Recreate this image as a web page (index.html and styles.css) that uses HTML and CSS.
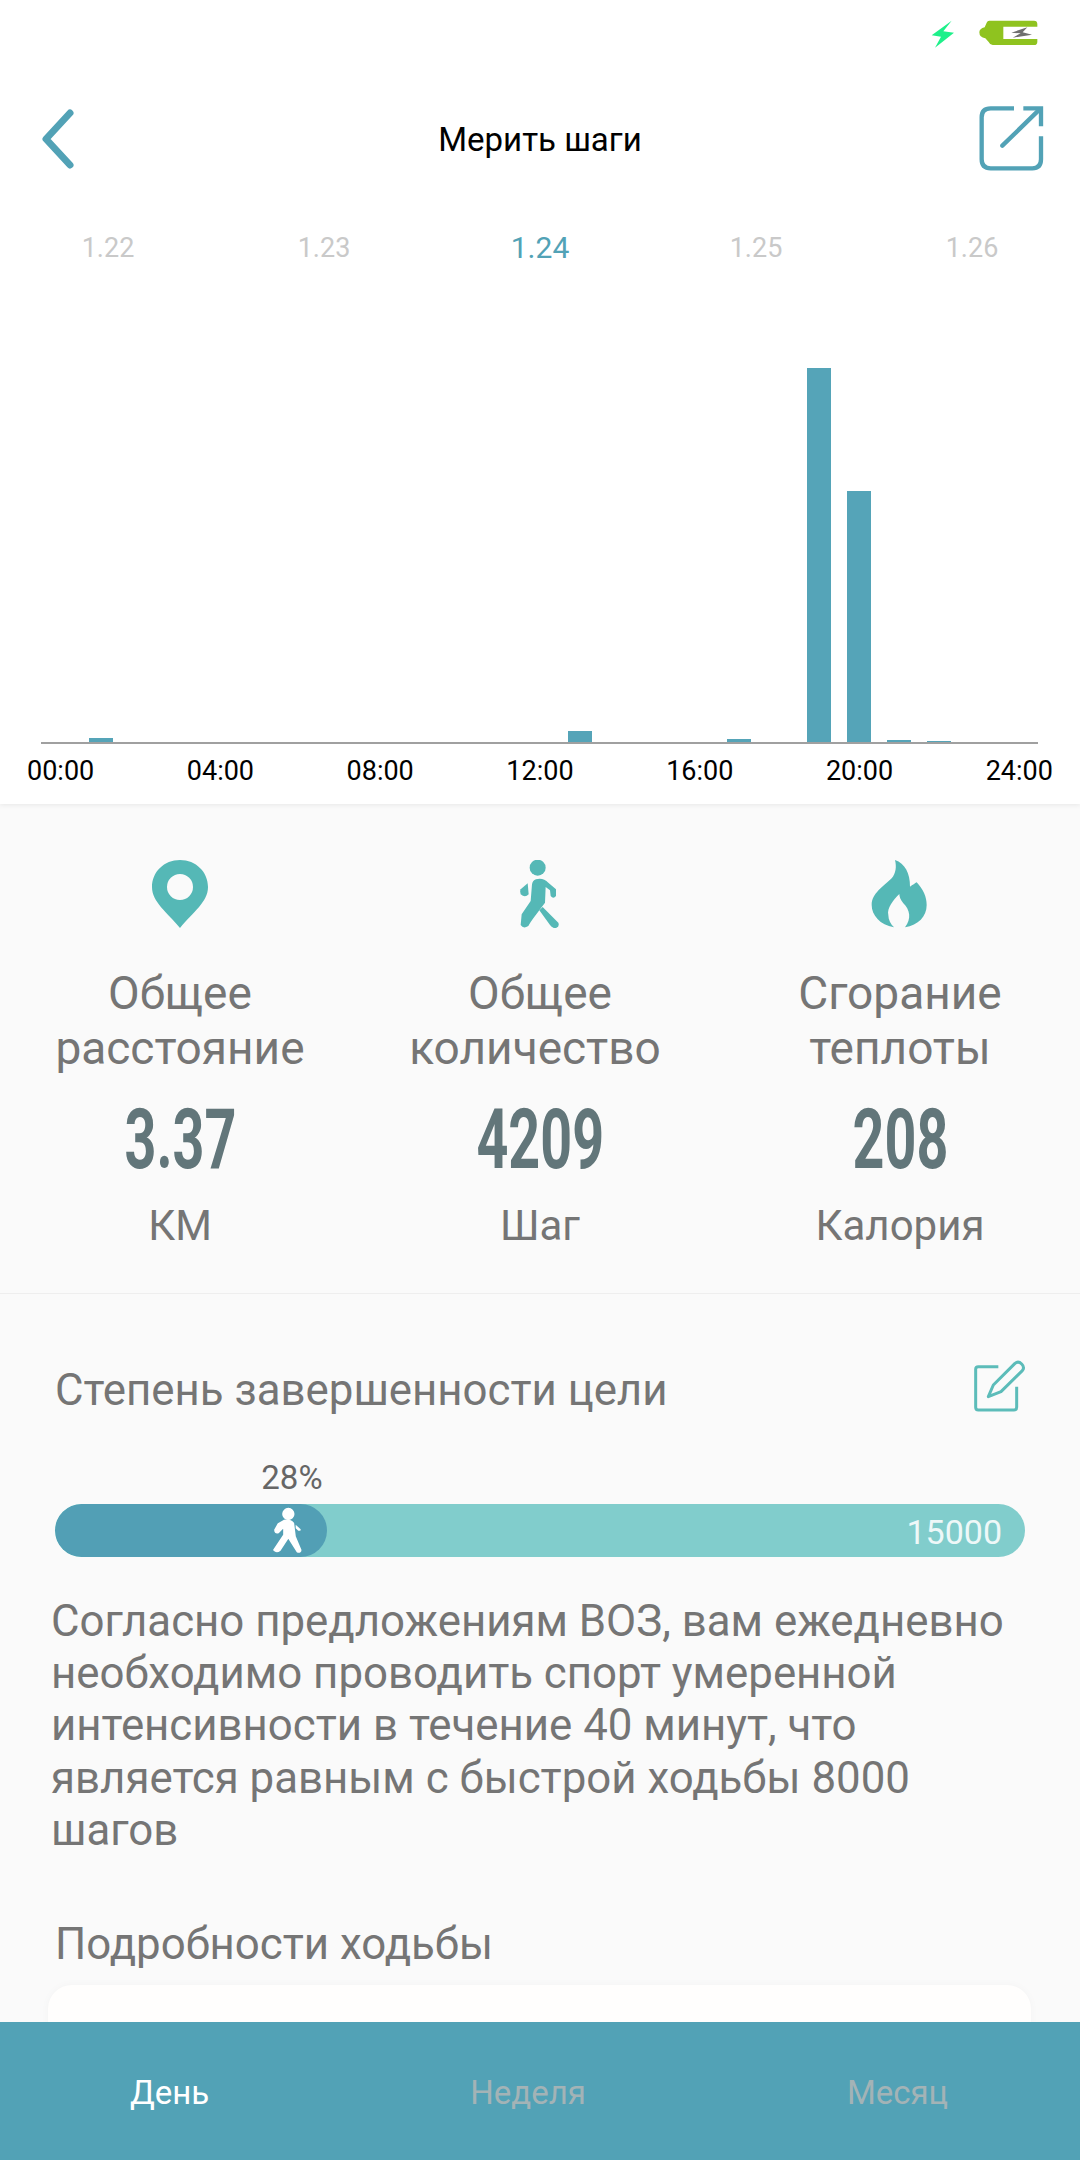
FILE: index.html
```html
<!DOCTYPE html>
<html lang="ru">
<head>
	<meta charset="UTF-8">
	<title>Мерить шаги</title>
	<link rel="stylesheet" href="styles.css">
</head>
<body>
<div class="page">
	<div class="content">
		<div class="top">
			<div class="status">
				<svg width="160" height="70" viewBox="0 0 480 210">
					<path d="M215 62 L155 106 L183 110 L165 143 L222 98 L190 94 Z" fill="#1ef08a"/>
					<path d="M328 62 H462 Q472 62 472 72 V80 H370 V117 H472 V125 Q472 135 462 135 H338 Q330 135 326 126 L316 115 Q298 112 298 97 Q298 86 314 82 L320 68 Q322 62 328 62 Z" fill="#8fc31f"/>
					<path d="M442 82 L394 98 L422 100 L398 113 L456 104 L428 97 Z" fill="#6f6f6f"/>
				</svg>
			</div>
			<div class="header">
				<svg class="back" width="40" height="66" viewBox="0 0 40 66">
					<path d="M31 7 L7 33 L31 59" fill="none" stroke="#52a2b6" stroke-width="7" stroke-linecap="round" stroke-linejoin="round"/>
				</svg>
				<div class="title">Мерить шаги</div>
				<svg class="share" width="85" height="85" viewBox="0 0 255 255">
					<g fill="none" stroke="#52a2b6" stroke-width="13">
						<path d="M132 40 H62 Q35 40 35 67 V193 Q35 220 62 220 H187 Q213 220 213 193 V124"/>
						<path d="M97 152 L208 44" stroke-linecap="round"/>
						<path d="M160 40 H213 V94"/>
					</g>
				</svg>
			</div>
			<div class="dates">
				<span>1.22</span>
				<span>1.23</span>
				<span class="on">1.24</span>
				<span>1.25</span>
				<span>1.26</span>
			</div>
			<div class="chart">
				<div class="slot"></div>
				<div class="slot"><i style="height:4px"></i></div>
				<div class="slot"></div>
				<div class="slot"></div>
				<div class="slot"></div>
				<div class="slot"></div>
				<div class="slot"></div>
				<div class="slot"></div>
				<div class="slot"></div>
				<div class="slot"></div>
				<div class="slot"></div>
				<div class="slot"></div>
				<div class="slot"></div>
				<div class="slot"><i style="height:11px"></i></div>
				<div class="slot"></div>
				<div class="slot"></div>
				<div class="slot"></div>
				<div class="slot"><i style="height:3px"></i></div>
				<div class="slot"></div>
				<div class="slot"><i style="height:374px"></i></div>
				<div class="slot"><i style="height:251px"></i></div>
				<div class="slot"><i style="height:2px"></i></div>
				<div class="slot"><i style="height:1px"></i></div>
				<div class="slot"></div>
			</div>
			<div class="hours">
				<span>00:00</span>
				<span>04:00</span>
				<span>08:00</span>
				<span>12:00</span>
				<span>16:00</span>
				<span>20:00</span>
				<span>24:00</span>
			</div>
		</div>

		<div class="stats">
			<div class="stat">
				<svg class="stat-icon" width="56" height="68" viewBox="0 0 56 68">
					<path fill-rule="evenodd" d="M28 68 C15 52 0 42 0 27 C0 12 12 0 28 0 C44 0 56 12 56 27 C56 42 41 52 28 68 Z M28 14 A13 13 0 1 0 28 40 A13 13 0 1 0 28 14 Z" fill="#55b8b6"/>
				</svg>
				<div class="stat-name">Общее<br>расстояние</div>
				<div class="stat-num"><span>3.37</span></div>
				<div class="stat-unit">КМ</div>
			</div>
			<div class="stat">
				<svg class="stat-icon" width="80" height="68" viewBox="0 27 240 204">
					<g fill="#55b8b6">
						<circle cx="113" cy="50" r="24"/>
						<path d="M108 85 C122 80 135 85 145 95 L168 115 L168 135 Q160 145 152 135 L150 118 L137 108 L135 155 L105 195 Q90 215 85 225 Q70 235 62 222 L65 190 L92 150 L96 100 Q98 88 108 85 Z"/>
						<path d="M83 97 L86 130 Q75 142 62 130 Q58 120 62 115 Z"/>
						<path d="M128 168 L175 215 Q180 228 165 232 Q155 230 150 222 L118 178 Z"/>
					</g>
				</svg>
				<div class="stat-name">Общее<br><span class="shift">количество</span></div>
				<div class="stat-num"><span>4209</span></div>
				<div class="stat-unit">Шаг</div>
			</div>
			<div class="stat">
				<svg class="stat-icon" width="80" height="68" viewBox="0 30 240 204">
					<path d="M105 30 C135 40 150 70 150 110 C158 105 165 100 170 97 C190 120 200 140 200 165 C200 200 175 225 135 232 C155 205 150 180 130 160 C122 150 118 140 118 132 C100 150 80 175 85 195 C85 210 92 222 102 232 C60 225 35 195 35 165 C35 130 70 110 95 85 C108 70 110 50 105 30 Z" fill="#55b8b6"/>
				</svg>
				<div class="stat-name">Сгорание<br>теплоты</div>
				<div class="stat-num"><span>208</span></div>
				<div class="stat-unit">Калория</div>
			</div>
		</div>

		<div class="goal">
			<div class="goal-head">
				<div class="goal-title">Степень завершенности цели</div>
				<svg class="edit" width="70" height="70" viewBox="0 0 210 210">
					<g fill="none" stroke="#5cbcb9" stroke-width="9">
						<path d="M100 50 H40 Q32 50 32 58 V172 Q32 180 40 180 H147 Q155 180 155 172 V110"/>
						<path d="M70 140 L85 105 L150 40 Q160 32 170 42 Q180 52 172 62 L108 125 Z" stroke-linejoin="round"/>
					</g>
				</svg>
			</div>
			<div class="pct" style="width:28%">28%</div>
			<div class="track">
				<div class="fill" style="width:28%"></div>
				<svg class="walker" width="80" height="60" viewBox="0 0 240 180">
					<g fill="#fff" stroke="#fff" stroke-width="5" stroke-linejoin="round">
						<circle cx="85" cy="42" r="16"/>
						<path d="M72 62 Q90 58 100 70 L105 110 L122 150 Q122 158 112 155 L85 112 L60 150 Q50 158 42 150 L72 105 L72 80 L55 97 Q45 100 45 90 L55 72 Z"/>
						<path d="M107 74 L122 88 Q124 94 115 92 L107 85 Z" stroke="none"/>
					</g>
				</svg>
				<span class="track-max">15000</span>
			</div>
			<p class="advice">Согласно предложениям ВОЗ, вам ежедневно необходимо проводить спорт умеренной интенсивности в течение 40 минут, что является равным с быстрой ходьбы 8000 шагов</p>
			<div class="detail-title">Подробности ходьбы</div>
			<div class="detail-card"></div>
		</div>
	</div>

	<div class="tabs">
		<span class="tab on">День</span>
		<span class="tab">Неделя</span>
		<span class="tab">Месяц</span>
	</div>
</div>
</body>
</html>
```

FILE: styles.css
```css
body {
	margin: 0;
	background: #fafafa;
	font-family: Roboto, "Noto Sans", sans-serif;
}
.page {
	display: flex;
	flex-direction: column;
	width: 1080px;
	height: 2160px;
	overflow: hidden;
}
.content {
	flex: 1;
	overflow: hidden;
}
.top {
	background: #fff;
	box-shadow: 0 1px 5px rgba(0, 0, 0, 0.08);
	height: 804px;
}
.status {
	display: flex;
	justify-content: flex-end;
	height: 70px;
	padding-right: 40px;
}
.header {
	display: grid;
	grid-template-columns: 1fr auto 1fr;
	align-items: center;
	height: 140px;
	padding: 0 25px;
}
.back {
	margin: -2px 0 0 14px;
}
.share {
	justify-self: end;
	align-self: start;
	margin-top: 25px;
}
.title {
	margin-top: -2px;
	font-size: 33px;
	color: #000;
}
.dates {
	display: grid;
	grid-template-columns: repeat(5, 216px);
	height: 76px;
	line-height: 77px;
	text-align: center;
	font-size: 27px;
	color: #c9c9c9;
}
.dates .on {
	font-size: 30px;
	line-height: 76px;
	color: #52a2b6;
}
.chart {
	display: flex;
	align-items: flex-end;
	height: 456px;
	margin: 0 42px 0 41px;
	padding-left: 8px;
	border-bottom: 2px solid #a0a0a0;
}
.slot {
	width: 39.9px;
}
.slot i {
	display: block;
	width: 24px;
	background: #55a4b8;
}
.hours {
	display: flex;
	justify-content: space-between;
	padding: 7px 27px 0 27px;
	font-size: 27px;
	line-height: 40px;
	color: #000;
}
.stats {
	display: grid;
	grid-template-columns: repeat(3, 360px);
	height: 490px;
	box-sizing: border-box;
	padding-top: 56px;
	border-bottom: 1px solid #eee;
}
.stat {
	display: flex;
	flex-direction: column;
	align-items: center;
	text-align: center;
	color: #757575;
}
.stat-icon {
	display: block;
}
.stat-name {
	margin-top: 38px;
	font-size: 46px;
	line-height: 54.5px;
	white-space: nowrap;
}
.shift {
	display: inline-block;
	margin-right: 10px;
}
.stat-num {
	margin-top: 25px;
	height: 80px;
	font-size: 83px;
	line-height: 80px;
	font-weight: 700;
	color: #62767a;
}
.stat-num span {
	display: inline-block;
	transform: scaleX(0.67);
}
.stat-unit {
	margin-top: 18px;
	font-size: 42px;
	line-height: 55px;
}
.goal {
	padding: 0 55px;
	color: #757575;
}
.goal-head {
	display: flex;
	justify-content: space-between;
	height: 70px;
	margin: 56px -10px 0 0;
}
.goal-title {
	margin-top: 5px;
	font-size: 43.8px;
	line-height: 70px;
}
.pct {
	box-sizing: border-box;
	margin-top: 36px;
	padding-right: 4px;
	font-size: 33px;
	line-height: 44px;
	text-align: right;
	white-space: nowrap;
	color: #666;
}
.track {
	position: relative;
	height: 53px;
	margin-top: 4px;
	border-radius: 27px;
	background: #81cdcc;
	overflow: hidden;
}
.fill {
	height: 100%;
	border-radius: 27px;
	background: #529fb5;
}
.walker {
	position: absolute;
	left: 205px;
	top: -4px;
}
.track-max {
	position: absolute;
	right: 23px;
	top: 0;
	font-size: 34px;
	line-height: 56px;
	color: #eef8f8;
}
.advice {
	margin: 38px -15px 0 -4px;
	font-size: 43.8px;
	line-height: 52.2px;
}
.detail-title {
	margin: 62px 0 0 0;
	font-size: 43.8px;
	line-height: 52px;
}
.detail-card {
	height: 200px;
	margin: 15px -6px 0 -7px;
	border-radius: 24px;
	background: #fffefd;
	box-shadow: 0 0 8px rgba(0, 0, 0, 0.03);
}
.tabs {
	display: flex;
	gap: 261px;
	height: 138px;
	padding-left: 130px;
	background: #52a2b6;
	font-size: 33px;
	line-height: 142px;
	color: #a3b3b6;
}
.tab.on {
	color: #fff;
}
```
